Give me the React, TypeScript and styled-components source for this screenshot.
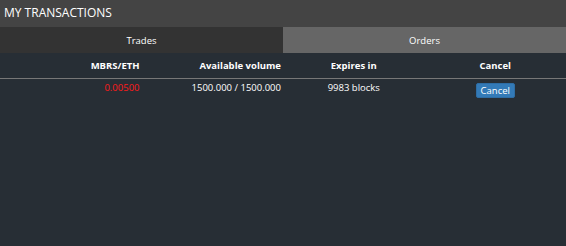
import React from "react";
import styled, { createGlobalStyle } from "styled-components";

const Global = createGlobalStyle`
  html, body {
    margin: 0;
    padding: 0;
    background: #272e35;
    font-family: "Open Sans", "Liberation Sans", sans-serif;
  }
`;

interface Order {
  price: string;
  volume: string;
  expires: string;
}

const orders: Order[] = [
  { price: "0.00500", volume: "1500.000 / 1500.000", expires: "9983 blocks" },
];

const App: React.FC = () => {
  return (
    <>
      <Global />
      <Panel>
        <Title>MY TRANSACTIONS</Title>
        <Tabs>
          <Tab active>Trades</Tab>
          <Tab>Orders</Tab>
        </Tabs>
        <Table>
          <thead>
            <tr>
              <Th align="right">MBRS/ETH</Th>
              <Th align="right">Available volume</Th>
              <Th align="center">Expires in</Th>
              <Th align="center">Cancel</Th>
            </tr>
          </thead>
          <tbody>
            {orders.map((o, i) => (
              <tr key={i}>
                <Td align="right" className="price">{o.price}</Td>
                <Td align="right">{o.volume}</Td>
                <Td align="center">{o.expires}</Td>
                <Td align="center">
                  <CancelButton>Cancel</CancelButton>
                </Td>
              </tr>
            ))}
          </tbody>
        </Table>
      </Panel>
    </>
  );
};

const Panel = styled.div`
  width: 566px;
  height: 246px;
  background: #272e35;
  color: #fff;
`;

const Title = styled.div`
  height: 27px;
  background: #444444;
  color: #fff;
  font-size: 12px;
  line-height: 26px;
  padding-left: 4px;
`;

const Tabs = styled.div`
  display: grid;
  grid-template-columns: 283px 283px;
  height: 26px;
`;

const Tab = styled.div<{ active?: boolean }>`
  background: ${(p) => (p.active ? "#333333" : "#666666")};
  color: #fff;
  font-size: 9.5px;
  display: flex;
  align-items: center;
  justify-content: center;
`;

const Table = styled.table`
  width: 566px;
  table-layout: fixed;
  border-collapse: collapse;
  font-size: 9.5px;
`;

const Th = styled.th<{ align: string }>`
  text-align: ${(p) => p.align};
  height: 24px;
  padding: 0 2px 1px;
  font-weight: 700;
  color: #fff;
  border-bottom: 1px solid #777;
`;

const Td = styled.td<{ align: string }>`
  text-align: ${(p) => p.align};
  padding: 2px 2px 0;
  height: 16px;
  vertical-align: top;
  color: #fff;
  &.price {
    color: #ff1a1a;
  }
`;

const CancelButton = styled.button`
  background: #337ab7;
  color: #fff;
  border: 1px solid #2e6da4;
  border-radius: 2px;
  font-family: inherit;
  font-size: 9.5px;
  line-height: 11px;
  padding: 1px 4px;
  margin-top: 2px;
  cursor: pointer;
`;

export default App;
